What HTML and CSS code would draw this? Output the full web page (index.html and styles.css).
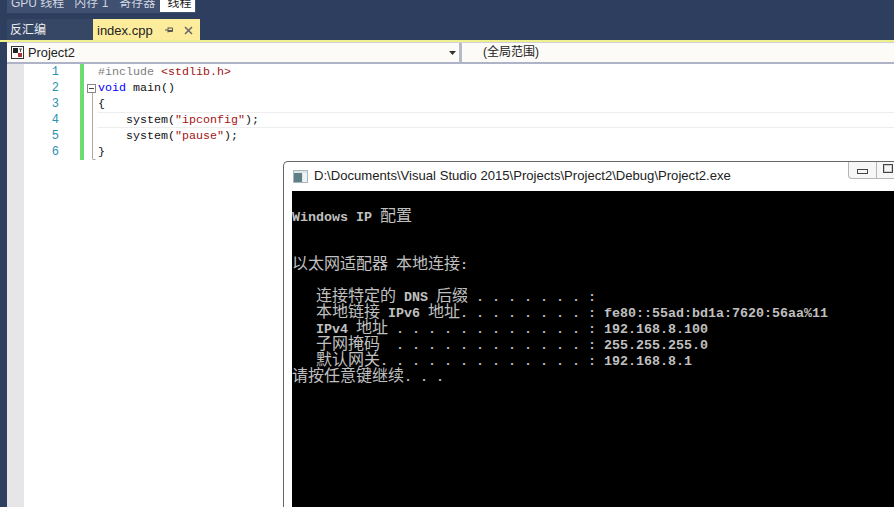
FILE: index.html
```html
<!DOCTYPE html>
<html lang="zh">
<head>
<meta charset="utf-8">
<title>Project2</title>
<link rel="stylesheet" href="styles.css">
</head>
<body>
<div class="ide">
  <div class="tool-tabs">
    <span class="tool-tab t1">GPU 线程</span>
    <span class="tool-tab t2">内存 1</span>
    <span class="tool-tab t3">寄存器</span>
    <span class="tool-tab on">线程</span>
  </div>
  <div class="doc-tabs">
    <span class="doc-tab">反汇编</span>
    <span class="doc-tab active">index.cpp
      <svg class="pin" width="10" height="10" viewBox="0 0 10 10"><path d="M1 5h3M4 2.500v5M4 3h4.500v3.500H4M4 5.500h4.500" fill="none" stroke="#555" stroke-width="1"/></svg>
      <svg class="close" width="9" height="9" viewBox="0 0 9 9"><path d="M1 1l7 7M8 1l-7 7" fill="none" stroke="#666" stroke-width="1.500"/></svg>
    </span>
  </div>
  <div class="doc-line"></div>
  <div class="nav">
    <div class="nav-left">
      <svg class="proj-icon" width="13" height="13" viewBox="0 0 13 13"><rect x=".5" y=".5" width="12" height="12" fill="#fff" stroke="#333"/><rect x="2" y="2" width="5" height="5" fill="#222"/><path d="M7 7h4v4H7z" fill="#a33"/><path d="M8 3h3M9.500 3v3" stroke="#555"/></svg>
      <span>Project2</span>
      <svg class="arrow" width="7" height="4" viewBox="0 0 7 4"><path d="M0 0h7L3.500 4z" fill="#333"/></svg>
    </div>
    <div class="nav-right">(全局范围)</div>
  </div>
  <div class="editor">
    <div class="glyph-margin"></div>
    <div class="numbers">
      <div>1</div><div>2</div><div>3</div><div>4</div><div>5</div><div>6</div>
    </div>
    <div class="change-bar"></div>
    <div class="fold">
      <svg width="9" height="96" viewBox="0 0 9 96"><rect x=".5" y="20.500" width="8" height="8" fill="#fff" stroke="#888"/><path d="M2 24.500h5" stroke="#444"/><path d="M5.500 29v66M5.500 95.500h3" stroke="#aaa" fill="none"/></svg>
    </div>
    <div class="code">
      <div class="ln"><span class="pp">#include</span> <span class="str">&lt;stdlib.h&gt;</span></div>
      <div class="ln"><span class="kw">void</span> main()</div>
      <div class="ln">{</div>
      <div class="ln current">    system(<span class="str">"ipconfig"</span>);</div>
      <div class="ln">    system(<span class="str">"pause"</span>);</div>
      <div class="ln">}</div>
    </div>
  </div>
</div>
<div class="console-win">
  <div class="titlebar">
    <svg class="app-icon" width="15" height="13" viewBox="0 0 15 13"><rect x=".5" y=".5" width="14" height="12" fill="#dfe6ea" stroke="#a9b8bc"/><rect x="1" y="3" width="8" height="9" fill="#5d7f85"/><rect x="10" y="3" width="4" height="9" fill="#eef2f4"/></svg>
    <span class="title">D:\Documents\Visual Studio 2015\Projects\Project2\Debug\Project2.exe</span>
    <div class="win-btns">
      <span class="win-btn min"><i></i></span>
      <span class="win-btn max"><i></i></span>
    </div>
  </div>
  <div class="screen">
    <div class="row">&nbsp;</div>
    <div class="row">Windows IP <b>配置</b></div>
    <div class="row">&nbsp;</div>
    <div class="row">&nbsp;</div>
    <div class="row"><b>以太网适配器</b> <b>本地连接</b>:</div>
    <div class="row">&nbsp;</div>
    <div class="row">   <b>连接特定的</b> DNS <b>后缀</b> . . . . . . . :</div>
    <div class="row">   <b>本地链接</b> IPv6 <b>地址</b>. . . . . . . . : fe80::55ad:bd1a:7620:56aa%11</div>
    <div class="row">   IPv4 <b>地址</b> . . . . . . . . . . . . : 192.168.8.100</div>
    <div class="row">   <b>子网掩码</b>  . . . . . . . . . . . . : 255.255.255.0</div>
    <div class="row">   <b>默认网关</b>. . . . . . . . . . . . . : 192.168.8.1</div>
    <div class="row"><b>请按任意键继续</b>. . .</div>
  </div>
</div>
</body>
</html>
```
FILE: styles.css
```css
* { box-sizing: border-box; }
html, body { margin: 0; height: 100%; }
body {
  width: 894px;
  height: 507px;
  overflow: hidden;
  position: relative;
  background: #2d3e5e;
  font-family: "Liberation Sans", "Noto Sans CJK SC", sans-serif;
}
.ide { display: flex; flex-direction: column; height: 507px; }
.tool-tabs {
  flex: none;
  height: 13px;
  margin-left: 7px;
  width: 189px;
  padding-left: 4px;
  display: flex;
  align-items: flex-start;
  background: #3f5070;
  color: #d0d6e2;
  font-size: 12px;
  overflow: hidden;
}
.tool-tab { display: block; height: 13px; line-height: 6px; white-space: nowrap; }
.t1 { margin-right: 10px; }
.t2 { margin-right: 11px; }
.t3 { margin-right: 5px; }
.tool-tab.on { background: #fff; color: #1e1e1e; width: 35px; height: 12px; padding-left: 7px; }
.doc-tabs { flex: none; height: 27px; padding: 6px 0 0 7px; display: flex; }
.doc-tab {
  width: 86px;
  background: #364765;
  color: #eef0f4;
  font-size: 12px;
  line-height: 23px;
  padding-left: 3px;
}
.doc-tab.active {
  width: 107px;
  background: #fdec9c;
  color: #222;
  font-size: 13px;
  padding: 1px 0 0 4px;
  display: flex;
  align-items: center;
}
.pin { margin-left: 11px; }
.close { margin-left: 10px; }
.doc-line { flex: none; height: 2px; background: #eef08e; }
.nav {
  flex: none;
  height: 22px;
  margin-left: 7px;
  display: flex;
  background: #fdfbf8;
  border-top: 1px solid #cfd0da;
  border-bottom: 2px solid #aeb3c7;
  font-size: 12px;
  color: #222;
}
.nav-left {
  width: 455px;
  display: flex;
  align-items: center;
  padding-left: 4px;
  border-right: 3px solid #b6bac9;
}
.nav-left span { margin-left: 4px; flex: 1; font-size: 12.800px; }
.arrow { margin-right: 3px; }
.nav-right { flex: 1; padding-left: 21px; line-height: 19px; }
.editor { flex: 1; margin-left: 7px; display: flex; background: #fff; }
.glyph-margin { width: 17px; background: #e6e6e9; }
.numbers {
  width: 35px;
  text-align: right;
  color: #2b91af;
  font: 12px/16px "Liberation Mono", monospace;
}
.change-bar { width: 4px; height: 96px; margin-left: 21px; background: #6fdc6f; }
.fold { flex: none; width: 10px; margin-left: 3px; height: 96px; }
.fold svg { display: block; }
.code { flex: 1; font: 11.670px/16px "Liberation Mono", monospace; color: #111; padding-left: 1px; }
.ln { height: 16px; white-space: pre; }
.ln.current { box-shadow: inset 0 1px 0 #eee, inset 0 -1px 0 #eee; margin-left: -1px; padding-left: 1px; }
.pp { color: #808080; }
.str { color: #a31515; }
.kw { color: #0000ff; }
.console-win {
  position: absolute;
  left: 283px;
  top: 161px;
  width: 611px;
  height: 346px;
  overflow: hidden;
  background: #fff;
  border: 1px solid #666;
  border-width: 1px 0 0 1px;
  border-radius: 5px 0 0 0;
  padding-left: 8px;
}
.titlebar { height: 29px; display: flex; align-items: center; position: relative; }
.app-icon { margin-left: 1px; flex: none; }
.title { margin-left: 6px; font-size: 13.100px; line-height: 26px; margin-bottom: 2px; color: #222; white-space: nowrap; }
.win-btns { position: absolute; left: 556px; top: 0; display: flex; }
.win-btn { display: flex; align-items: center; width: 28px; height: 17px; border: 1px solid #b5b5b5; border-top: 0; background: #f6f6f6; }
.win-btn.min { justify-content: center; border-radius: 0 0 0 4px; border-right: 0; }
.win-btn i { display: block; }
.min i { width: 11px; height: 5px; border: 1px solid #444; margin-top: 2px; }
.max { padding-left: 6px; }
.max i { width: 10px; height: 9px; margin-top: -3px; border: 1px solid #444; box-shadow: inset 0 0 0 1px #ccc; }
.screen {
  background: #000;
  color: #c0c0c0;
  height: 316px;
  font: bold 13.330px/14px "Liberation Mono", monospace;
}
.row { height: 16px; white-space: pre; }
.row b { font: 400 16px/14px "Noto Sans CJK SC", sans-serif; }
```
